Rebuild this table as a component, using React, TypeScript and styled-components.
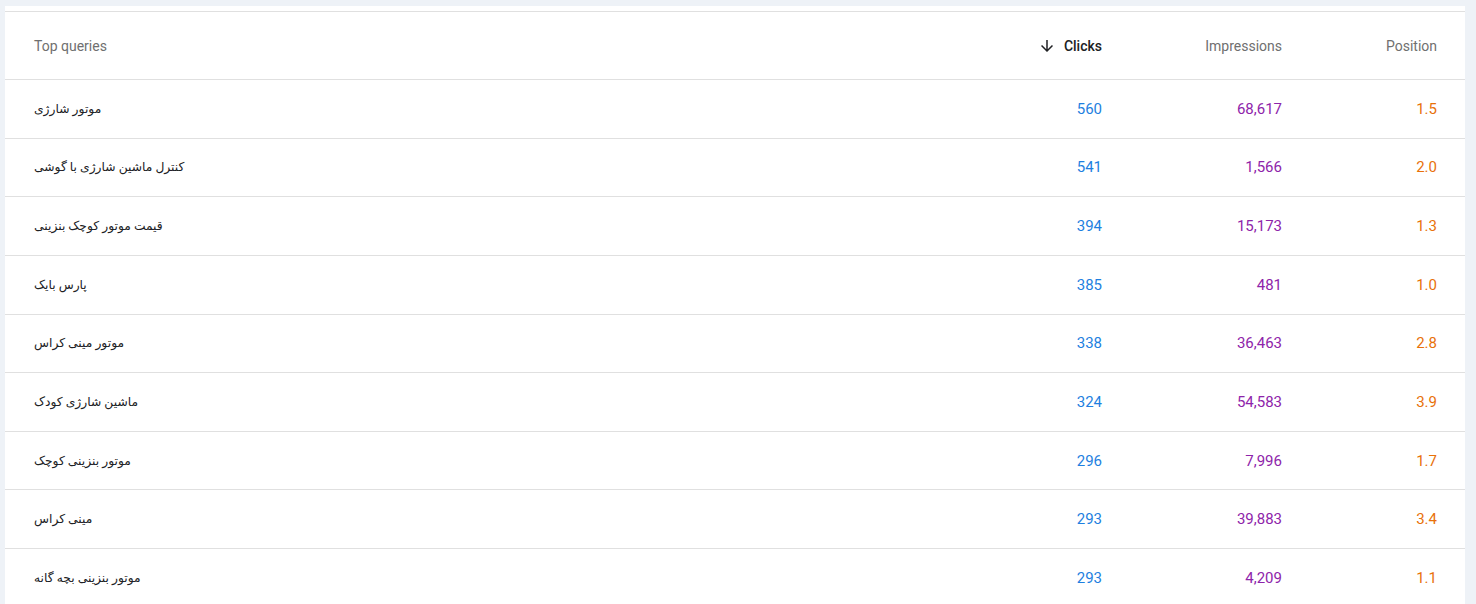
import React from 'react';
import styled, { createGlobalStyle } from 'styled-components';

const GlobalStyle = createGlobalStyle`
	html, body {
		margin: 0;
		padding: 0;
		background: #eef2f7;
	}
	body {
		font-family: Roboto, "Liberation Sans", sans-serif;
	}
`;

const Page = styled.div`
	padding: 6px 11px 0 5px;
`;

const Card = styled.div`
	background: #fff;
	padding-top: 5px;
`;

const Table = styled.div`
	border-top: 1px solid #e0e0e0;
`;

const Row = styled.div<{ $head?: boolean }>`
	display: grid;
	grid-template-columns: 1fr 180px 180px 155px;
	align-items: center;
	box-sizing: border-box;
	height: ${(p) => (p.$head ? '68px' : '58.625px')};
	padding: 0 28px 0 29px;
	border-bottom: 1px solid #e0e0e0;
`;

const HeadCell = styled.div<{ $active?: boolean; $right?: boolean }>`
	display: flex;
	align-items: center;
	justify-content: ${(p) => (p.$right ? 'flex-end' : 'flex-start')};
	gap: 8px;
	font-size: 14px;
	font-weight: ${(p) => (p.$active ? 500 : 400)};
	color: ${(p) => (p.$active ? '#202124' : '#6f6f6f')};
	padding-top: 1px;
`;

const Query = styled.div`
	font-family: Roboto, "DejaVu Sans", sans-serif;
	font-size: 12.3px;
	color: #202124;
	text-align: left;
`;

const Num = styled.div<{ $color: string }>`
	font-size: 15px;
	text-align: right;
	color: ${(p) => p.$color};
`;

const ArrowDown = () => (
	<svg width="18" height="18" viewBox="0 0 24 24" fill="#202124">
		<path d="M20 12l-1.41-1.41L13 16.17V4h-2v12.17l-5.58-5.59L4 12l8 8 8-8z" />
	</svg>
);

const rows = [
	['موتور شارژی', '560', '68,617', '1.5'],
	['کنترل ماشین شارژی با گوشی', '541', '1,566', '2.0'],
	['قیمت موتور کوچک بنزینی', '394', '15,173', '1.3'],
	['پارس بایک', '385', '481', '1.0'],
	['موتور مینی کراس', '338', '36,463', '2.8'],
	['ماشین شارژی کودک', '324', '54,583', '3.9'],
	['موتور بنزینی کوچک', '296', '7,996', '1.7'],
	['مینی کراس', '293', '39,883', '3.4'],
	['موتور بنزینی بچه گانه', '293', '4,209', '1.1'],
];

const App = () => {
	return (
		<Page>
			<GlobalStyle />
			<Card>
				<Table>
					<Row $head>
						<HeadCell>Top queries</HeadCell>
						<HeadCell $right $active>
							<ArrowDown />
							Clicks
						</HeadCell>
						<HeadCell $right>Impressions</HeadCell>
						<HeadCell $right>Position</HeadCell>
					</Row>
					{rows.map(([q, clicks, impr, pos]) => (
						<Row key={q}>
							<Query>{q}</Query>
							<Num $color="#1e7fe0">{clicks}</Num>
							<Num $color="#8e24aa">{impr}</Num>
							<Num $color="#e8710a">{pos}</Num>
						</Row>
					))}
				</Table>
			</Card>
		</Page>
	);
};

export default App;
